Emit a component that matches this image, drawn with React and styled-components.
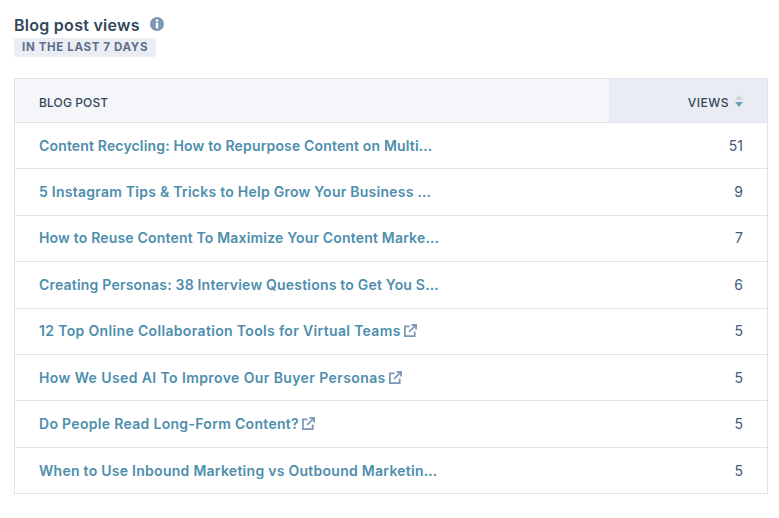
import React from 'react';
import styled, { createGlobalStyle } from 'styled-components';

const GlobalStyle = createGlobalStyle`
  html, body {
    margin: 0;
    padding: 0;
    background: #fff;
  }
  body {
    font-family: "Inter", "Liberation Sans", sans-serif;
  }
`;

const Page = styled.div`
  width: 779px;
  height: 518px;
  padding: 15px 11px 0 14px;
  box-sizing: border-box;
  overflow: hidden;
`;

const TitleRow = styled.div`
  display: flex;
  align-items: center;
  gap: 10px;
  height: 20px;
`;

const Title = styled.h2`
  margin: 0;
  font-size: 16px;
  line-height: 20px;
  font-weight: 600;
  letter-spacing: 0.27px;
  color: #33475b;
`;

const InfoIcon = styled.svg`
  width: 14px;
  height: 14px;
  display: block;
  margin-bottom: 2px;
`;

const Tag = styled.div`
  display: inline-block;
  margin-top: 3px;
  padding: 0 8px;
  height: 19px;
  line-height: 19px;
  background: #eaedf3;
  border-radius: 3px;
  font-size: 11.5px;
  font-weight: 700;
  letter-spacing: 0.65px;
  color: #5e6f8c;
`;

const Table = styled.div`
  margin-top: 21px;
  border: 1px solid #dfe3eb;
`;

const HeadRow = styled.div`
  display: flex;
  height: 43px;
  background: #f5f6f9;
  border-bottom: 1px solid #dfe3eb;
  color: #33475b;
  font-size: 12px;
  font-weight: 500;
  letter-spacing: 0.12px;
`;

const HeadPost = styled.div`
  flex: 1;
  display: flex;
  align-items: center;
  padding: 3px 0 0 24px;
`;

const HeadViews = styled.div`
  width: 158px;
  box-sizing: border-box;
  display: flex;
  align-items: center;
  justify-content: flex-end;
  gap: 6px;
  padding: 3px 24px 0 0;
  background: #e9ecf2;
  letter-spacing: 0.5px;
`;

const SortIcon = styled.svg`
  width: 8px;
  height: 14px;
  display: block;
  margin-bottom: 3px;
`;

const Row = styled.div`
  display: flex;
  align-items: center;
  justify-content: space-between;
  height: 46.4px;
  box-sizing: border-box;
  padding: 0 24px 1px;
  border-bottom: 1px solid #dfe3eb;
  font-size: 14px;
  &:last-child {
    height: 45.4px;
    padding-bottom: 0;
    border-bottom: 0;
  }
`;

const PostLink = styled.a`
  display: flex;
  align-items: center;
  gap: 4px;
  color: #4e8ead;
  font-weight: 600;
  letter-spacing: ${(p) => p.$tracking}px;
  text-decoration: none;
`;

const ViewCount = styled.span`
  color: #425b76;
  font-weight: 400;
`;

const ExternalIcon = styled.svg`
  width: 13px;
  height: 13px;
  display: block;
  margin-left: -1px;
  fill: none;
  stroke: #7c98b6;
  stroke-width: 1.9;
`;

const posts = [
  { title: 'Content Recycling: How to Repurpose Content on Multi…', views: 51, tracking: 0.16 },
  { title: '5 Instagram Tips & Tricks to Help Grow Your Business …', views: 9, tracking: 0.25 },
  { title: 'How to Reuse Content To Maximize Your Content Marke…', views: 7, tracking: 0.18 },
  { title: 'Creating Personas: 38 Interview Questions to Get You S…', views: 6, tracking: 0.2 },
  { title: '12 Top Online Collaboration Tools for Virtual Teams', views: 5, tracking: 0.34, external: true },
  { title: 'How We Used AI To Improve Our Buyer Personas', views: 5, tracking: 0.4, external: true },
  { title: 'Do People Read Long-Form Content?', views: 5, tracking: 0.31, external: true },
  { title: 'When to Use Inbound Marketing vs Outbound Marketin…', views: 5, tracking: 0.27 },
];

const App = () => {
  return (
    <Page>
      <GlobalStyle />
      <TitleRow>
        <Title>Blog post views</Title>
        <InfoIcon viewBox="0 0 14 14">
          <circle cx="7" cy="7" r="7" fill="#7c98b6" />
          <circle cx="7" cy="3.6" r="1.3" fill="#fff" />
          <rect x="5.8" y="5.8" width="2.4" height="5.6" fill="#fff" />
        </InfoIcon>
      </TitleRow>
      <Tag>IN THE LAST 7 DAYS</Tag>
      <Table>
        <HeadRow>
          <HeadPost>BLOG POST</HeadPost>
          <HeadViews>
            VIEWS
            <SortIcon viewBox="0 0 8 14">
              <path d="M4 1 L8 6 H0 Z" fill="#cbd6e2" />
              <path d="M0 8 H8 L4 13 Z" fill="#6a9fb8" />
            </SortIcon>
          </HeadViews>
        </HeadRow>
        {posts.map((post) => (
          <Row key={post.title}>
            <PostLink href="#" $tracking={post.tracking}>
              {post.title}
              {post.external && (
                <ExternalIcon viewBox="0 0 14 14">
                  <path d="M6 2.5 H1 V13 H11.5 V8" />
                  <path d="M5.5 8.5 L12.5 1.5 M8 1 H13 V6" />
                </ExternalIcon>
              )}
            </PostLink>
            <ViewCount>{post.views}</ViewCount>
          </Row>
        ))}
      </Table>
    </Page>
  );
};

export default App;
